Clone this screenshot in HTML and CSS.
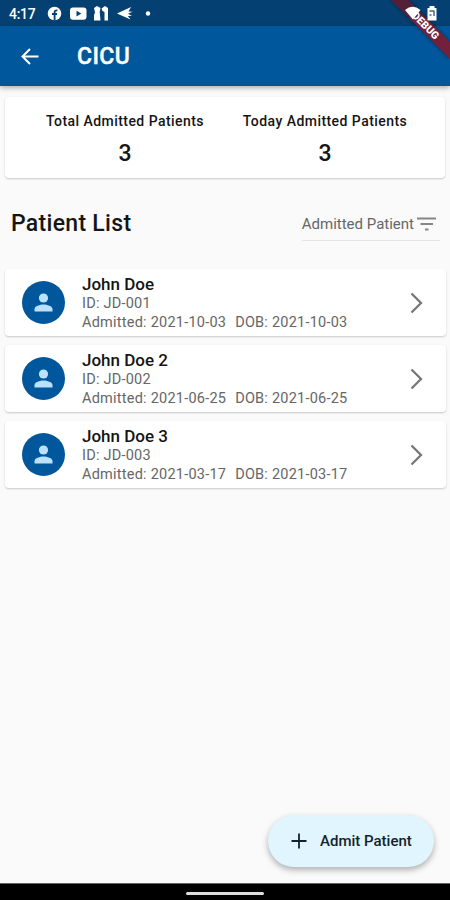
FILE: index.html
```html
<!DOCTYPE html>
<html lang="en">
<head>
<meta charset="utf-8">
<title>CICU</title>
<link rel="stylesheet" href="styles.css">
</head>
<body>
<div class="screen">
  <div class="status">
    <span class="time">4:17</span>
    <svg class="status-icons" width="110" height="26" viewBox="46 0 110 26">
      <circle cx="54.5" cy="13.5" r="6.8" fill="#fff"/>
      <path d="M54.6 20.5v-8.2q0-2.2 2.8-2M52 14h5" fill="none" stroke="#064072" stroke-width="1.8"/>
      <rect x="70" y="7.5" width="16.500" height="12.300" rx="3" fill="#fff"/>
      <path d="M76.500 10.800v5.600l4.800-2.800z" fill="#064072"/>
      <path d="M94 8l3-2 3.500 2-.8 4 .8 8.500H94V15l1-2.500zM101.500 8.500l3.500-2.500 3 2v12.500h-3.500V12l-2-1z" fill="#fff"/>
      <path d="M117 13.500l14-6.500-2.500 4.500 4 .2-4.500 2 4 2-4.200.2 2.700 3.600z" fill="#fff"/>
      <circle cx="148" cy="13.500" r="2.200" fill="#fff"/>
    </svg>
  </div>
  <header class="appbar">
    <svg width="18" height="17" viewBox="0 0 18 17"><path d="M17.500 8.500H2M9 1L1.500 8.500 9 16" fill="none" stroke="#fff" stroke-width="2"/></svg>
    <h1>CICU</h1>
  </header>
  <svg class="banner" width="70" height="70" viewBox="380 0 70 70">
    <path d="M391 0h17l42 42v17z" fill="#000" class="banner-shadow"/>
    <path d="M391 0h17l42 42v17z" fill="#73203a"/>
    <path d="M391 0h17l26 26h-17z" fill="#541f38" class="banner-top"/>
    <text x="425.800" y="28.600" text-anchor="middle" transform="rotate(45 425 25)" class="banner-text">DEBUG</text>
    <path d="M405 10q7.500-6.500 15.500 0l-7.500 9.500z" fill="#fff"/>
    <path d="M429.500 6h5v2h2v12.500h-9V8h2z" fill="#fff"/>
    <path d="M429.500 11h5M429.500 15h2M434 11v5" stroke="#47658d" stroke-width="1.500"/>
  </svg>

  <section class="card stats">
    <div class="stat"><span class="label">Total Admitted Patients</span><span class="num">3</span></div>
    <div class="stat"><span class="label">Today Admitted Patients</span><span class="num">3</span></div>
  </section>

  <div class="list-head">
    <h2>Patient List</h2>
    <div class="filter"><span>Admitted Patient</span>
      <svg width="19" height="14" viewBox="0 0 19 14"><path d="M0 1.500h19M3.500 7h12.500M8 12.500h3.500" stroke="#868686" stroke-width="2.200"/></svg>
    </div>
  </div>

  <main class="list">
    <article class="card patient">
      <svg class="avatar" viewBox="0 0 43 43"><circle cx="21.500" cy="21.500" r="21.500" fill="#01579b"/><circle cx="21.500" cy="17" r="4.600" fill="#b8e2ff"/><path d="M12.500 30.500v-2.300c0-3.200 5.500-4.700 9-4.700s9 1.500 9 4.700v2.300z" fill="#b8e2ff"/></svg>
      <div class="info"><h3>John Doe</h3><p class="id">ID: JD-001</p><p class="dates"><span>Admitted: 2021-10-03</span><span>DOB: 2021-10-03</span></p></div>
      <svg class="chevron" viewBox="0 0 14 22"><path d="M1.500 1.500L11 11l-9.500 9.500" fill="none" stroke="#777" stroke-width="2.300"/></svg>
    </article>
    <article class="card patient">
      <svg class="avatar" viewBox="0 0 43 43"><circle cx="21.500" cy="21.500" r="21.500" fill="#01579b"/><circle cx="21.500" cy="17" r="4.600" fill="#b8e2ff"/><path d="M12.500 30.500v-2.300c0-3.200 5.500-4.700 9-4.700s9 1.500 9 4.700v2.300z" fill="#b8e2ff"/></svg>
      <div class="info"><h3>John Doe 2</h3><p class="id">ID: JD-002</p><p class="dates"><span>Admitted: 2021-06-25</span><span>DOB: 2021-06-25</span></p></div>
      <svg class="chevron" viewBox="0 0 14 22"><path d="M1.500 1.500L11 11l-9.500 9.500" fill="none" stroke="#777" stroke-width="2.300"/></svg>
    </article>
    <article class="card patient">
      <svg class="avatar" viewBox="0 0 43 43"><circle cx="21.500" cy="21.500" r="21.500" fill="#01579b"/><circle cx="21.500" cy="17" r="4.600" fill="#b8e2ff"/><path d="M12.500 30.500v-2.300c0-3.200 5.500-4.700 9-4.700s9 1.500 9 4.700v2.300z" fill="#b8e2ff"/></svg>
      <div class="info"><h3>John Doe 3</h3><p class="id">ID: JD-003</p><p class="dates"><span>Admitted: 2021-03-17</span><span>DOB: 2021-03-17</span></p></div>
      <svg class="chevron" viewBox="0 0 14 22"><path d="M1.500 1.500L11 11l-9.500 9.500" fill="none" stroke="#777" stroke-width="2.300"/></svg>
    </article>
  </main>

  <button class="fab">
    <svg width="16" height="16" viewBox="0 0 16 16"><path d="M8 .5v15M.5 8h15" stroke="#14232b" stroke-width="1.800"/></svg>
    <span>Admit Patient</span>
  </button>
  <footer class="nav"><i></i></footer>
</div>
</body>
</html>
```
FILE: styles.css
```css
* { box-sizing: border-box; }
body { margin: 0; font-family: Roboto, sans-serif; color: #151515; }
h1, h2, h3, p { margin: 0; }
.screen { position: relative; width: 450px; height: 900px; background: #fafafa; display: flex; flex-direction: column; overflow: hidden; }
.status { height: 26px; flex: none; background: #044071; display: flex; align-items: center; padding-left: 9px; color: #fff; }
.time { width: 37px; font-size: 14px; font-weight: 500; letter-spacing: -.3px; padding-top: 1px; }
.appbar { height: 60px; flex: none; background: #01579b; display: flex; align-items: center; padding-left: 21px; gap: 38px; color: #fff; box-shadow: 0 2px 5px rgba(0,0,0,.3); }
.appbar h1 { font-size: 23px; font-weight: 500; letter-spacing: .4px; -webkit-text-stroke: .4px #fff; }
.banner { position: absolute; top: 0; right: 0; }
.banner-shadow { opacity: .45; filter: blur(2px); }
.banner-top { clip-path: inset(0 0 8px 0); }
.banner-text { font-size: 10.5px; font-weight: 900; fill: #fff; }
.card { background: #fff; border-radius: 4px; box-shadow: 0 1px 2px rgba(0,0,0,.2); }
.stats { margin: 11px 5px 0; height: 81px; flex: none; display: flex; padding: 0 20px; }
.stat { width: 200px; display: flex; flex-direction: column; align-items: center; padding-top: 15px; }
.label { font-size: 14px; line-height: 18px; font-weight: 500; letter-spacing: .45px; white-space: nowrap; }
.num { font-size: 23px; line-height: 26px; font-weight: 500; margin-top: 11px; }
.list-head { height: 85px; flex: none; display: flex; justify-content: space-between; padding: 29px 10px 0 11px; }
h2 { font-size: 23px; line-height: 34px; font-weight: 500; letter-spacing: .3px; }
.filter { height: 34px; display: flex; align-items: center; gap: 3px; border-bottom: 1px solid #e4e4e4; padding-right: 4px; color: #666; font-size: 15px; }
.list { flex: 1; display: flex; flex-direction: column; gap: 9px; padding: 6px 4px 0 5px; }
.patient { height: 67px; flex: none; display: flex; align-items: center; padding: 0 22px 0 17px; }
.avatar { width: 43px; height: 43px; }
.info { flex: 1; padding-left: 17px; padding-top: 1px; }
h3 { font-size: 17px; line-height: 19px; font-weight: 500; }
.info p { font-size: 14.5px; line-height: 19px; letter-spacing: .23px; color: #666; }
.dates { display: flex; gap: 9px; white-space: nowrap; }
.chevron { width: 14px; height: 22px; }
.fab { position: absolute; left: 268px; top: 815px; width: 166px; height: 52px; border: 0; border-radius: 26px; background: #e1f5fe; box-shadow: 0 3px 6px rgba(0,0,0,.3); display: flex; align-items: center; gap: 13px; padding: 0 0 0 23px; font: 500 15px Roboto, sans-serif; color: #14232b; }
.nav { height: 17px; flex: none; background: #000; border-top: 1px solid #666; display: flex; justify-content: center; align-items: center; }
.nav i { width: 78px; height: 3px; border-radius: 2px; background: #ddd; margin-top: 2px; }
```
